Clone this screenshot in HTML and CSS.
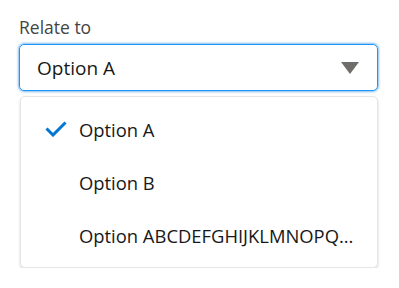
FILE: index.html
```html
<!DOCTYPE html>
<html>
<head>
    <link rel="stylesheet" href="styles.css">
</head>
<body>
    <div class="combobox">
        <label class="combo-label">Relate to</label>
        <div class="combo-input">
            <span class="combo-value">Option A</span>
            <svg class="combo-arrow" width="18" height="12" viewBox="0 0 18 12">
                <path d="M0 0 L18 0 L9 12 Z" fill="#706e6b"/>
            </svg>
        </div>
        <div class="listbox">
            <div class="option selected">
                <svg class="check" width="22" height="16" viewBox="0 0 22 16">
                    <path d="M1.5 7.5 L8 14 L20.5 1.5" fill="none" stroke="#0176d3" stroke-width="3"/>
                </svg>
                <span class="option-text">Option A</span>
            </div>
            <div class="option">
                <span class="option-text">Option B</span>
            </div>
            <div class="option">
                <span class="option-text">Option ABCDEFGHIJKLMNOPQ...</span>
            </div>
        </div>
    </div>
</body>
</html>
```

FILE: styles.css
```css
body {
    margin: 0;
    background-color: #fff;
    font-family: 'Open Sans', 'Liberation Sans', sans-serif;
    color: #181818;
}
.combobox {
    width: 359px;
    padding: 15px 0 0 19px;
}
.combo-label {
    display: block;
    font-size: 17.5px;
    line-height: 24px;
    color: #444;
    margin-bottom: 5px;
}
.combo-input {
    display: flex;
    align-items: center;
    justify-content: space-between;
    height: 47px;
    box-sizing: border-box;
    border: 1px solid #1b96ff;
    border-radius: 5px;
    box-shadow: 0 0 3px #0176d3;
    padding: 0 18px 0 17px;
}
.combo-value {
    font-size: 19px;
}
.listbox {
    margin: 5px 0 0 1px;
    width: 358px;
    box-sizing: border-box;
    border: 1px solid #e5e5e5;
    border-radius: 5px;
    box-shadow: 0 2px 3px rgba(0, 0, 0, 0.16);
    padding: 6px 0 5px;
}
.option {
    display: flex;
    align-items: center;
    height: 53px;
    padding-left: 58px;
    position: relative;
}
.check {
    position: absolute;
    left: 24px;
    top: 18px;
}
.option-text {
    font-size: 18.4px;
    white-space: nowrap;
}
```
